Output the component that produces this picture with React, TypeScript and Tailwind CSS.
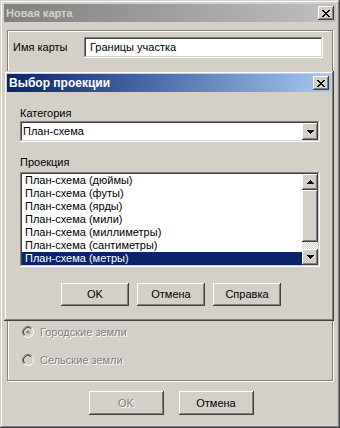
import React from "react";

const winFrame =
  "shadow-[inset_-1px_-1px_#404040,inset_1px_1px_#d4d0c8,inset_-2px_-2px_#808080,inset_2px_2px_#ffffff]";
const raised =
  "shadow-[inset_-1px_-1px_#404040,inset_1px_1px_#ffffff,inset_-2px_-2px_#808080,inset_2px_2px_#d4d0c8]";
const sunken =
  "shadow-[inset_-1px_-1px_#ffffff,inset_1px_1px_#808080,inset_-2px_-2px_#d4d0c8,inset_2px_2px_#404040]";

function CloseGlyph() {
  return (
    <svg width="8" height="7" viewBox="0 0 8 7" shapeRendering="crispEdges">
      <path
        d="M0 0h2v1h1v1h2V1h1V0h2v1H7v1H6v1H5v1h1v1h1v1h1v1H6V6H5V5H3v1H2v1H0V6h1V5h1V4h1V3H2V2H1V1H0z"
        fill="#000"
      />
    </svg>
  );
}

function CloseButton() {
  return (
    <div className={`w-[16px] h-[14px] bg-[#d4d0c8] flex items-center justify-center ${raised}`}>
      <CloseGlyph />
    </div>
  );
}

function Arrow({ up = false }: { up?: boolean }) {
  return (
    <svg width="7" height="4" viewBox="0 0 7 4" shapeRendering="crispEdges">
      {up ? (
        <path d="M3 0h1v1h1v1h1v1h1v1H0V3h1V2h1V1h1z" fill="#000" />
      ) : (
        <path d="M0 0h7v1H6v1H5v1H4v1H3V3H2V2H1V1H0z" fill="#000" />
      )}
    </svg>
  );
}

function Radio({ checked }: { checked: boolean }) {
  return (
    <svg width="12" height="12" viewBox="0 0 12 12">
      <circle cx="6" cy="6" r="4.5" fill="#d4d0c8" />
      <path d="M2.11 9.89 A5.5 5.5 0 0 1 9.89 2.11" stroke="#808080" strokeWidth="1" fill="none" />
      <path d="M9.89 2.11 A5.5 5.5 0 0 1 2.11 9.89" stroke="#ffffff" strokeWidth="1" fill="none" />
      <path d="M2.82 9.18 A4.5 4.5 0 0 1 9.18 2.82" stroke="#404040" strokeWidth="1" fill="none" />
      <path d="M9.18 2.82 A4.5 4.5 0 0 1 2.82 9.18" stroke="#d4d0c8" strokeWidth="1" fill="none" />
      {checked && <circle cx="6" cy="6" r="1.6" fill="#808080" />}
    </svg>
  );
}

const items = [
  "План-схема (дюймы)",
  "План-схема (футы)",
  "План-схема (ярды)",
  "План-схема (мили)",
  "План-схема (миллиметры)",
  "План-схема (сантиметры)",
  "План-схема (метры)",
];

const btn = `flex items-center justify-center bg-[#d4d0c8] font-normal ${raised}`;

export default function App() {
  return (
    <div
      className={`relative w-[340px] h-[428px] bg-[#d4d0c8] p-[4px] flex flex-col text-[11px] leading-[13px] font-normal text-black ${winFrame}`}
      style={{ fontFamily: '"Liberation Sans", Arial, sans-serif' }}
    >
      {/* outer title bar */}
      <div className="h-[18px] flex items-center justify-between bg-gradient-to-r from-[#808080] to-[#c0c0c0] pl-[2px] pr-[2px]">
        <span className="font-bold text-[#d4d0c8] text-[11px]">Новая карта</span>
        <CloseButton />
      </div>

      {/* group box */}
      <div className="mt-[8px] ml-[3px] w-[326px] h-[351px] border border-[#808080] shadow-[1px_1px_#ffffff,inset_1px_1px_#ffffff] flex flex-col">
        <div className="mt-[6px] flex items-center">
          <span className="ml-[5px] w-[71px]">Имя карты</span>
          <div className={`w-[239px] h-[21px] bg-white flex items-center pl-[6px] ${sunken}`}>
            Границы участка
          </div>
        </div>
        <div className="flex-1" />
        <div className="flex flex-col gap-[12px] pb-[12px] pl-[14px]">
          <div className="h-[16px] flex items-center gap-[6px]">
            <Radio checked />
            <span className="text-[#808080] [text-shadow:1px_1px_#ffffff]">Городские земли</span>
          </div>
          <div className="h-[16px] flex items-center gap-[6px]">
            <Radio checked={false} />
            <span className="text-[#808080] [text-shadow:1px_1px_#ffffff]">Сельские земли</span>
          </div>
        </div>
      </div>

      {/* outer buttons */}
      <div className="mt-[10px] flex justify-center gap-[15px] pl-[2px]">
        <div className={`w-[75px] h-[24px] ${btn}`}>
          <span className="text-[#808080] [text-shadow:1px_1px_#ffffff]">OK</span>
        </div>
        <div className={`w-[75px] h-[24px] ${btn}`}>Отмена</div>
      </div>

      {/* inner dialog window */}
      <div className={`absolute left-[4px] top-[71px] w-[330px] h-[250px] bg-[#d4d0c8] p-[3px] flex flex-col ${winFrame}`}>
        <div className="h-[18px] flex items-center justify-between bg-gradient-to-r from-[#0a246a] to-[#a6caf0] pl-[2px] pr-[2px]">
          <span className="font-bold text-white text-[12px]">Выбор проекции</span>
          <CloseButton />
        </div>
        <div className="pl-[13px] flex flex-col">
          <div className="mt-[15px] h-[13px]">Категория</div>
          <div className={`mt-[1px] w-[300px] h-[21px] bg-white flex items-center justify-between p-[2px] ${sunken}`}>
            <span className="pl-[1px]">План-схема</span>
            <div className={`w-[16px] h-[17px] bg-[#d4d0c8] flex items-center justify-center ${raised}`}>
              <Arrow />
            </div>
          </div>
          <div className="mt-[14px] h-[13px]">Проекция</div>
          <div className={`mt-[3px] w-[300px] h-[95px] bg-white p-[2px] flex ${sunken}`}>
            <div className="flex-1 flex flex-col">
              {items.map((it, i) => (
                <div
                  key={it}
                  className={`h-[13px] leading-[13px] pl-[3px] ${
                    i === items.length - 1 ? "bg-[#0a246a] text-white" : ""
                  }`}
                >
                  {it}
                </div>
              ))}
            </div>
            <div className="w-[16px] flex flex-col">
              <div className={`h-[16px] bg-[#d4d0c8] flex items-center justify-center ${raised}`}>
                <Arrow up />
              </div>
              <div className={`h-[52px] bg-[#d4d0c8] ${raised}`} />
              <div className="flex-1 bg-[repeating-conic-gradient(#d4d0c8_0_25%,#ffffff_0_50%)] bg-[length:2px_2px]" />
              <div className={`h-[16px] bg-[#d4d0c8] flex items-center justify-center ${raised}`}>
                <Arrow />
              </div>
            </div>
          </div>
          <div className="mt-[16px] ml-[41px] flex gap-[8px]">
            <div className={`w-[68px] h-[23px] ${btn}`}>OK</div>
            <div className={`w-[68px] h-[23px] ${btn}`}>Отмена</div>
            <div className={`w-[68px] h-[23px] ${btn}`}>Справка</div>
          </div>
        </div>
      </div>
    </div>
  );
}
